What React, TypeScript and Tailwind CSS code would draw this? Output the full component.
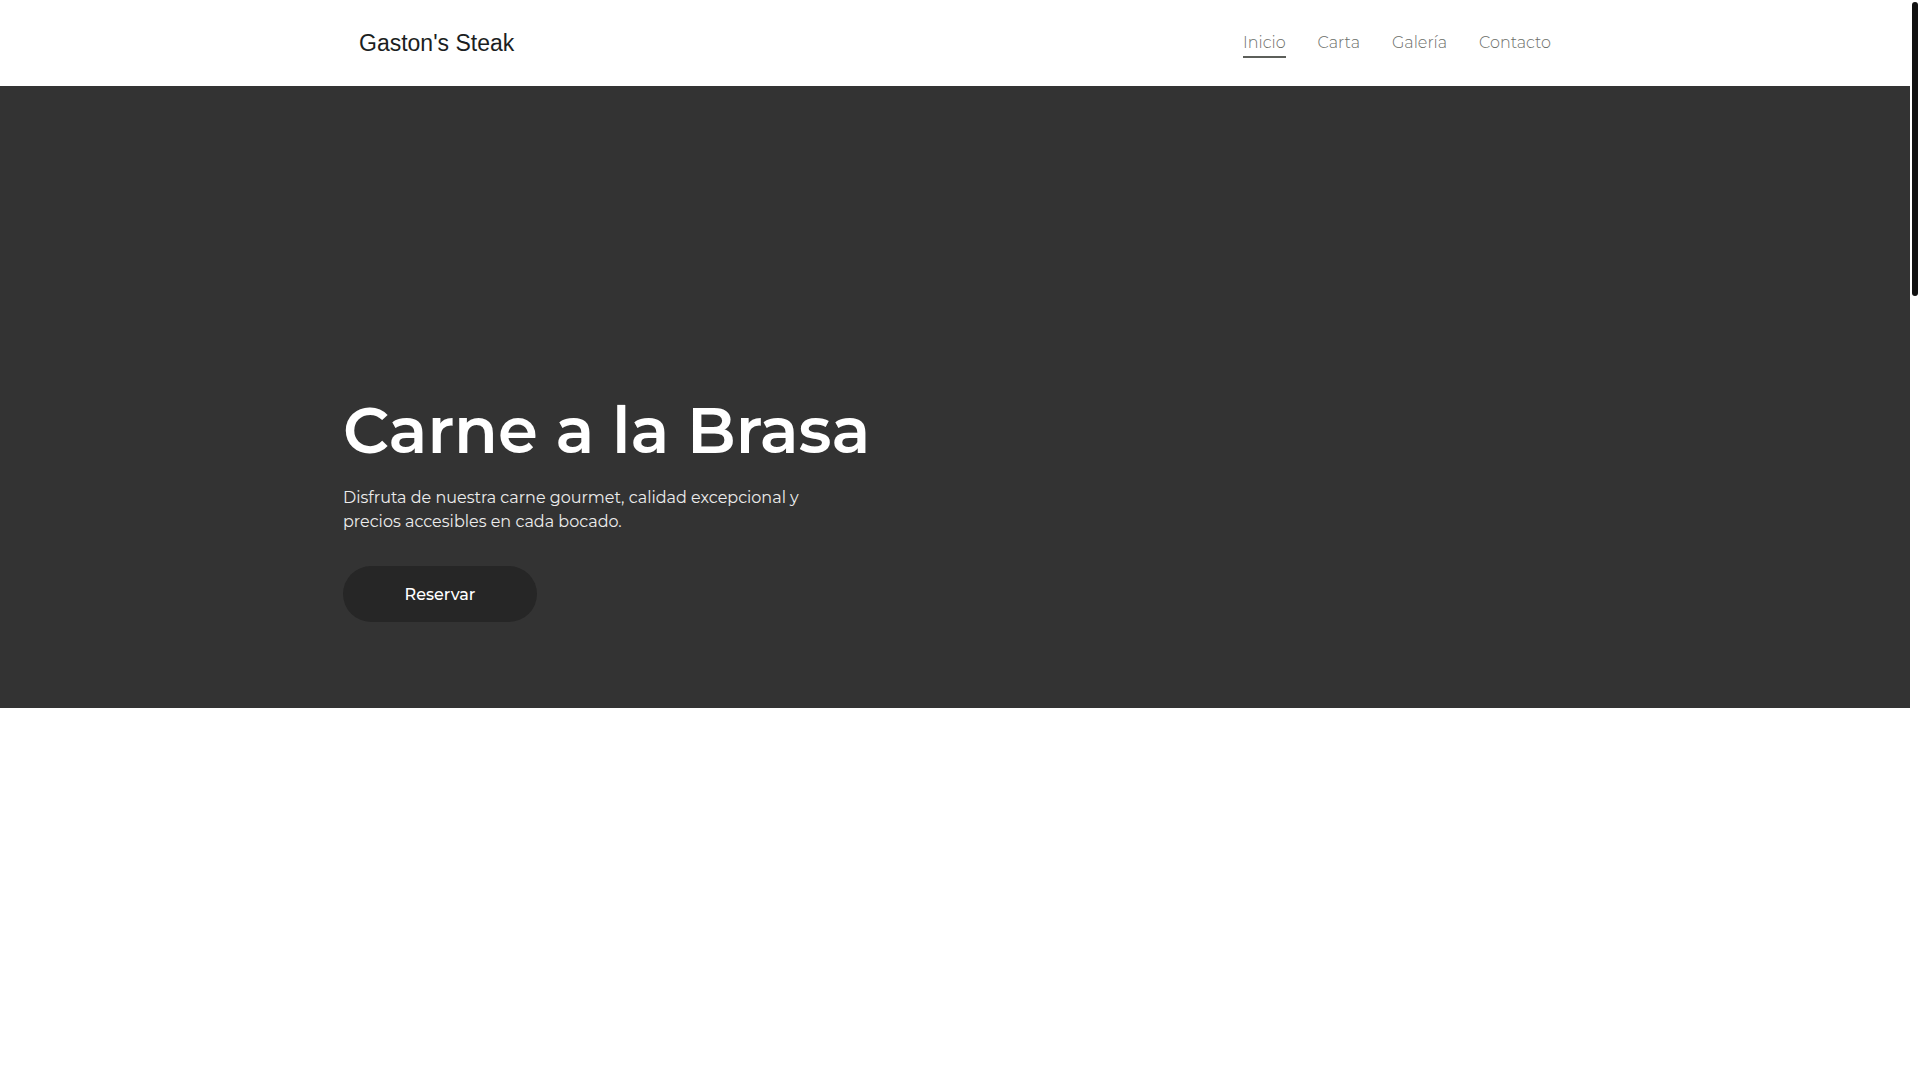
import { useState } from "react";

const links = ["Inicio", "Carta", "Galería", "Contacto"];

export default function App() {
    const [active] = useState("Inicio");

    return (
        <div className="h-screen flex bg-white font-['Montserrat','Inter',sans-serif]">
            <main className="flex-1 overflow-hidden">
                <header className="h-[86px] bg-white">
                    <div className="max-w-[1224px] h-full mx-auto px-4 flex items-center justify-between">
                        <a className="font-['Liberation_Sans',Arial,sans-serif] text-[23px] text-[#1b1e22]">
                            Gaston's Steak
                        </a>
                        <nav className="flex items-center gap-8">
                            {links.map((link) => (
                                <a
                                    key={link}
                                    className={`relative text-[16px] font-light text-[#6b6e69] ${
                                        link === active
                                            ? "after:absolute after:left-0 after:right-0 after:-bottom-[3px] after:h-[2px] after:bg-[#5c5f5a]"
                                            : ""
                                    }`}
                                >
                                    {link}
                                </a>
                            ))}
                        </nav>
                    </div>
                </header>

                <section className="h-[622px] bg-[#333333]">
                    <div className="max-w-[1224px] h-full mx-auto flex flex-col justify-end pb-[86px]">
                        <h1 className="text-[64px] leading-[1.2] font-semibold text-white">
                            Carne a la Brasa
                        </h1>
                        <p className="mt-[17px] max-w-[470px] text-[16px] leading-[24px] text-[#ececec]">
                            Disfruta de nuestra carne gourmet, calidad excepcional y
                            precios accesibles en cada bocado.
                        </p>
                        <div className="mt-8">
                            <button className="w-[194px] h-[56px] pt-[2px] rounded-full bg-[#262626] text-white text-[16px] font-medium">
                                Reservar
                            </button>
                        </div>
                    </div>
                </section>
            </main>

            {/* scrollbar */}
            <div className="w-[10px] shrink-0 bg-white pt-[2px]">
                <div className="mx-auto w-[6px] h-[294px] rounded-full bg-[#111]" />
            </div>
        </div>
    );
}
